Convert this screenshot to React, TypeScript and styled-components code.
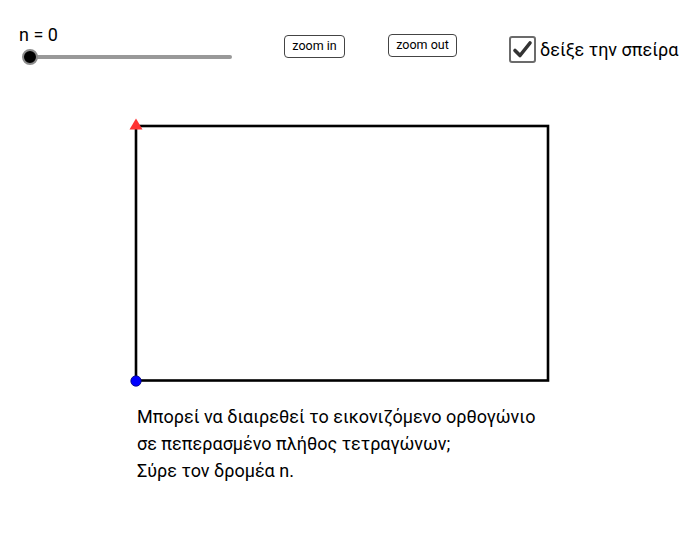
import React from "react";
import styled, { createGlobalStyle } from "styled-components";

const Global = createGlobalStyle`
  html, body { margin: 0; padding: 0; background: #ffffff; }
  body { font-family: Roboto, "Noto Sans", "DejaVu Sans", sans-serif; color: #000; }
`;

const Page = styled.div`
  box-sizing: border-box;
  width: 692px;
  height: 533px;
  padding-top: 24px;
  display: flex;
  flex-direction: column;
  overflow: hidden;
  background: #ffffff;
`;

const Toolbar = styled.div`
  box-sizing: border-box;
  height: 86px;
  padding-left: 18px;
  display: grid;
  grid-template-columns: 266px 104px 121px auto;
  align-items: start;
`;

const Cell = styled.div<{ $top: number }>`
  padding-top: ${(p) => p.$top}px;
`;

const SliderBox = styled.div`
  display: flex;
  flex-direction: column;
  width: 230px;
`;

const SliderLabel = styled.div`
  font-size: 18px;
  line-height: 21px;
  padding-left: 1px;
`;

const Track = styled.div`
  position: relative;
  margin-top: 10px;
  margin-left: 11px;
  width: 203px;
  height: 4px;
  border-radius: 2px;
  background: #999999;
`;

const Thumb = styled.div`
  position: absolute;
  left: -7px;
  top: -6.5px;
  width: 12px;
  height: 12px;
  border-radius: 50%;
  background: #000000;
  border: 2.5px solid #8c8c8c;
`;

const ZoomButton = styled.button<{ $w: number }>`
  box-sizing: border-box;
  width: ${(p) => p.$w}px;
  height: 23px;
  padding: 0 0 2px;
  background: #ffffff;
  border: 1px solid #444444;
  border-radius: 4px;
  font-family: Roboto, "Noto Sans", sans-serif;
  font-size: 12.5px;
  color: #000000;
  display: flex;
  align-items: center;
  justify-content: center;
`;

const CheckRow = styled.label`
  display: flex;
  align-items: center;
  gap: 4px;
  font-size: 18px;
  white-space: nowrap;
`;

const CheckBox = styled.span`
  box-sizing: border-box;
  width: 27px;
  height: 27px;
  border: 2px solid #6b6b6b;
  border-radius: 3px;
  background: #ffffff;
  display: flex;
  align-items: center;
  justify-content: center;
`;

const Figure = styled.svg`
  display: block;
  flex: none;
`;

const Caption = styled.div`
  margin-top: 13px;
  padding-left: 137px;
  display: flex;
  flex-direction: column;
`;

const CaptionLine = styled.p`
  margin: 0;
  font-size: 18px;
  line-height: 27px;
  white-space: nowrap;
`;

export default function App() {
  return (
    <>
      <Global />
      <Page>
        <Toolbar>
          <Cell $top={0}>
            <SliderBox>
              <SliderLabel>n = 0</SliderLabel>
              <Track>
                <Thumb />
              </Track>
            </SliderBox>
          </Cell>
          <Cell $top={11}>
            <ZoomButton $w={61}>zoom in</ZoomButton>
          </Cell>
          <Cell $top={10}>
            <ZoomButton $w={69}>zoom out</ZoomButton>
          </Cell>
          <Cell $top={12}>
            <CheckRow>
              <CheckBox>
                <svg width="21" height="21" viewBox="0 0 21 21">
                  <path
                    d="M3 11.5 L8 16.5 L18 4"
                    fill="none"
                    stroke="#333333"
                    strokeWidth="3.6"
                    strokeLinecap="round"
                    strokeLinejoin="round"
                  />
                </svg>
              </CheckBox>
              <span>δείξε την σπείρα</span>
            </CheckRow>
          </Cell>
        </Toolbar>

        <Figure width="692" height="280" viewBox="0 110 692 280">
          <rect x="136" y="126" width="412" height="254.5" fill="none" stroke="#000" strokeWidth="2.6" />
          <polygon points="136,118.5 142.5,129.5 129.5,129.5" fill="#ff3333" />
          <circle cx="136" cy="381" r="5.2" fill="#0000ff" stroke="#00007a" strokeWidth="0.8" />
        </Figure>

        <Caption>
          <CaptionLine>Μπορεί να διαιρεθεί το εικονιζόμενο ορθογώνιο</CaptionLine>
          <CaptionLine>σε πεπερασμένο πλήθος τετραγώνων;</CaptionLine>
          <CaptionLine>Σύρε τον δρομέα n.</CaptionLine>
        </Caption>
      </Page>
    </>
  );
}
